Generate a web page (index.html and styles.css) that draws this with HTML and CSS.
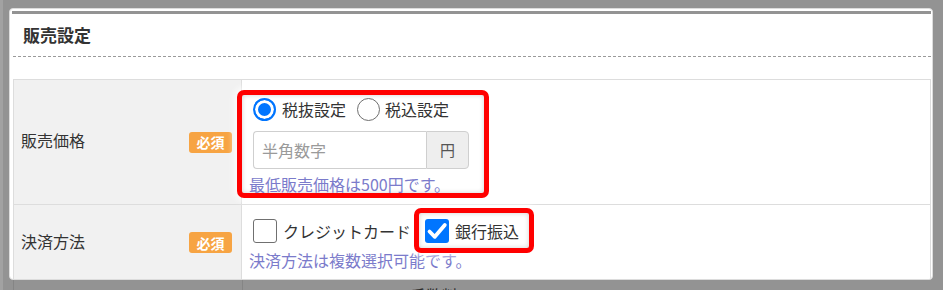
FILE: index.html
```html
<!DOCTYPE html>
<html lang="ja">
<head>
    <meta charset="UTF-8">
    <meta name="viewport" content="width=device-width, initial-scale=1.0">
    <title>販売設定</title>
    <link rel="stylesheet" href="styles.css">
</head>
<body>

    <div class="card">
        <div class="card-bar"></div>
        <div class="card-header">販売設定</div>

        <!-- 設定テーブル -->
        <div class="form-table">
            <div class="form-row row-price">
                <div class="form-label">
                    <span class="label-text">販売価格</span>
                    <span class="badge">必須</span>
                </div>
                <div class="form-value">
                    <div class="highlight box-price">
                        <div class="radio-row">
                            <span class="radio checked"></span>
                            <span class="radio-text">税抜設定</span>
                            <span class="radio"></span>
                            <span class="radio-text second">税込設定</span>
                        </div>
                        <div class="input-group">
                            <div class="input">半角数字</div>
                            <div class="addon">円</div>
                        </div>
                        <div class="help">最低販売価格は500円です。</div>
                    </div>
                </div>
            </div>

            <div class="form-row row-pay">
                <div class="form-label">
                    <span class="label-text">決済方法</span>
                    <span class="badge">必須</span>
                </div>
                <div class="form-value">
                    <div class="check-row">
                        <span class="check"></span>
                        <span class="check-text">クレジットカード</span>
                        <div class="highlight box-bank">
                            <span class="check checked">
                                <svg width="24" height="24" viewBox="0 0 24 24">
                                    <path d="M4.5 12.5 L9.8 17.8 L19.8 6" fill="none" stroke="#fff" stroke-width="3.8" stroke-linecap="round" stroke-linejoin="round"/>
                                </svg>
                            </span>
                            <span class="check-text">銀行振込</span>
                        </div>
                    </div>
                    <div class="help help-pay">決済方法は複数選択可能です。</div>
                </div>
            </div>
        </div>
    </div>

    <!-- オーバーレイの下の行 -->
    <div class="below">
        <div class="below-label"></div>
        <div class="below-value">手数料</div>
    </div>

</body>
</html>
```

FILE: styles.css
```css
body {
    font-family: "Noto Sans CJK JP", "Noto Sans", sans-serif;
    background-color: #939393;
    border-left: 3px solid #a2a2a2;
    margin: 0;
    padding-top: 8px;
    height: 282px;
    overflow: hidden;
    color: #333;
}
.card {
    margin-left: 6px;
    width: 924px;
    height: 272px;
    box-sizing: border-box;
    background-color: white;
    border: 1px solid #dcdcdc;
    border-radius: 4px;
    padding: 2px 1px 0 3px;
    overflow: hidden;
}
.card-bar {
    height: 3px;
    background-color: #939393;
    margin: 0 0 0 -1px;
}
.card-header {
    height: 42px;
    line-height: 42px;
    padding-left: 10px;
    font-size: 17px;
    font-weight: bold;
    color: #333;
    border-bottom: 1px dashed #9a9a9a;
    margin-bottom: 22px;
}
.form-table {
    border: 1px solid #dddddd;
    width: 918px;
    box-sizing: border-box;
}
.form-row {
    display: flex;
    border-bottom: 1px solid #dddddd;
}
.row-price {
    height: 124px;
}
.row-pay {
    height: 80px;
}
.form-label {
    width: 228px;
    flex-shrink: 0;
    box-sizing: border-box;
    background-color: #f1f1f1;
    border-right: 1px solid #dddddd;
    display: flex;
    align-items: center;
    justify-content: space-between;
    padding: 0 9px 0 7px;
    font-size: 16px;
}
.label-text {
    margin-bottom: 4px;
}
.row-pay .form-label {
    height: 75px;
}
.badge {
    width: 43px;
    height: 21px;
    background-color: #f7a443;
    color: white;
    border-radius: 3px;
    font-size: 14px;
    font-weight: bold;
    display: flex;
    align-items: center;
    justify-content: center;
}
.form-value {
    flex: 1;
    padding-top: 10px;
}
.highlight {
    position: relative;
    z-index: 1;
    box-sizing: border-box;
    border: 5px solid #ff0000;
    border-radius: 7px;
    box-shadow: inset 0 0 5px rgba(0, 0, 0, 0.18), 0 0 7px 3px rgba(255, 255, 255, 0.75);
}
.box-price {
    width: 252px;
    height: 108px;
    margin-left: -5px;
    padding: 0 0 0 7px;
}
.radio-row {
    display: flex;
    align-items: center;
    height: 28px;
    font-size: 16px;
}
.radio {
    width: 23px;
    height: 23px;
    box-sizing: border-box;
    border-radius: 50%;
    border: 1.5px solid #6f6f6f;
    background-color: white;
    margin-left: 11px;
}
.radio:first-child {
    margin-left: 4px;
}
.radio.checked {
    border: 2px solid #0075ff;
    background-color: #0075ff;
    box-shadow: inset 0 0 0 3px white;
}
.radio-text {
    margin-left: 6px;
}
.radio-text.second {
    margin-left: 5px;
}
.input-group {
    display: flex;
    margin: 8px 0 0 4px;
    height: 38px;
    width: 216px;
    font-size: 16px;
}
.input {
    width: 173px;
    box-sizing: border-box;
    border: 1px solid #cfcfcf;
    border-right: none;
    border-radius: 4px 0 0 4px;
    padding-left: 8px;
    line-height: 36px;
    color: #9a9a9a;
}
.addon {
    width: 43px;
    box-sizing: border-box;
    border: 1px solid #cfcfcf;
    border-radius: 0 4px 4px 0;
    background-color: #eeeeee;
    text-align: center;
    line-height: 36px;
    font-size: 15px;
    color: #555;
}
.help {
    font-size: 16px;
    line-height: 18px;
    color: #7b7bcb;
    margin-top: 6px;
}
.row-pay .form-value {
    padding: 3px 0 0 7px;
}
.check-row {
    display: flex;
    align-items: center;
    height: 45px;
    font-size: 16px;
}
.check {
    width: 24px;
    height: 24px;
    box-sizing: border-box;
    border: 1.5px solid #707070;
    border-radius: 3px;
    background-color: white;
    margin-left: 4px;
}
.check.checked {
    border: none;
    background-color: #0075ff;
    margin-left: 0;
}
.check.checked svg {
    display: block;
}
.check-text {
    margin-left: 6px;
}
.box-bank {
    display: flex;
    align-items: center;
    height: 45px;
    margin-left: 3px;
    padding: 0 10px 0 6px;
}
.help-pay {
    margin-top: -2px;
}
.below {
    display: flex;
    margin-left: 10px;
    height: 20px;
}
.below-label {
    width: 228px;
    border-left: 1px solid #858585;
    border-right: 1px solid #858585;
}
.below-value {
    padding: 5px 0 0 167px;
    font-size: 16px;
    line-height: 20px;
    color: #2c2c2c;
}
```
